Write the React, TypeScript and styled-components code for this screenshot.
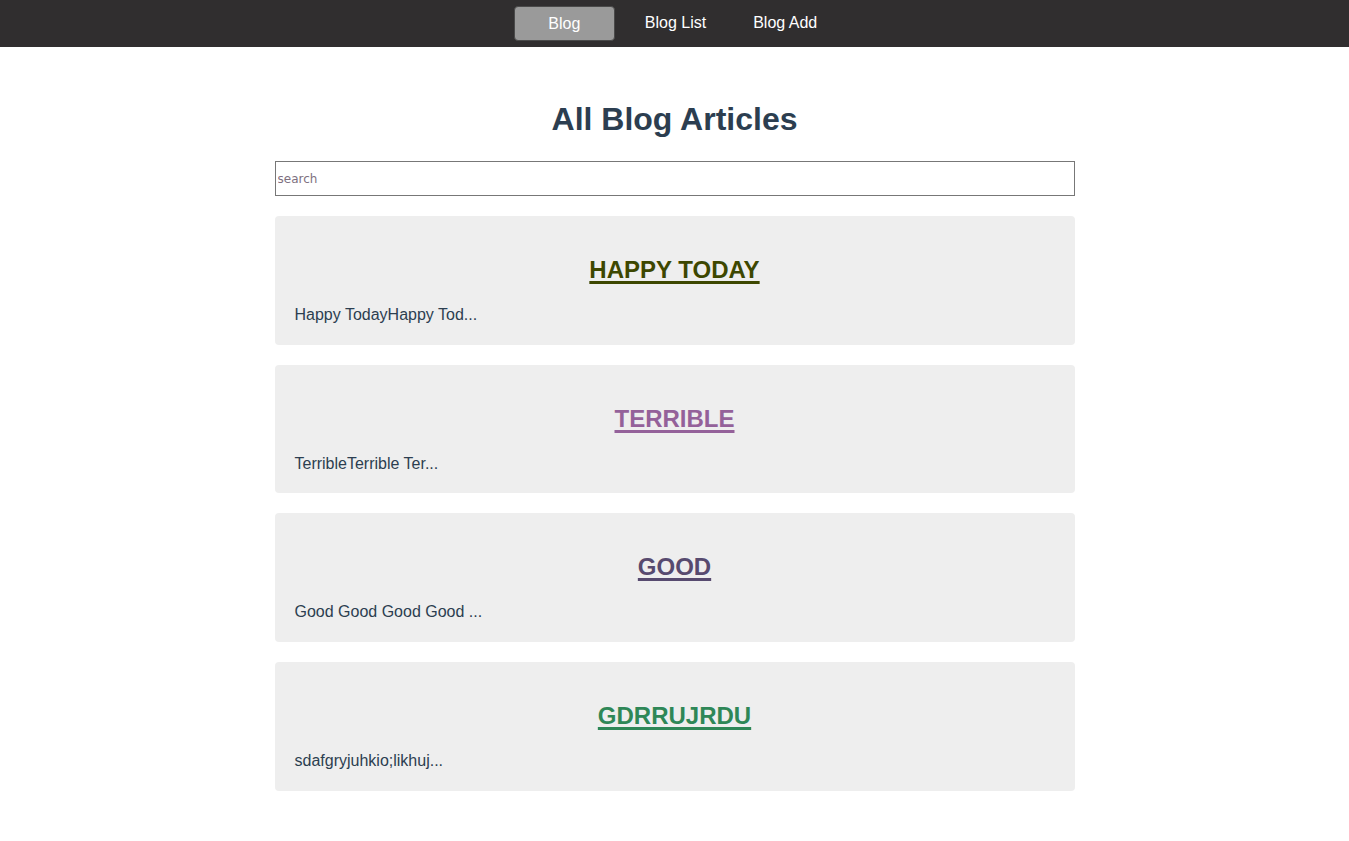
import React, { useState } from "react";
import styled, { createGlobalStyle } from "styled-components";

const GlobalStyle = createGlobalStyle`
  html, body { margin: 0; padding: 0; background: #fff; }
  body { font-family: "Liberation Sans", Arial, Helvetica, sans-serif; color: #2c3e50; }
`;

const NavBar = styled.nav`
  height: 47px;
  background: #302e2f;
  display: flex;
  justify-content: center;
  align-items: flex-start;
  padding-right: 18px;
  box-sizing: border-box;
`;

const NavItem = styled.a<{ $active?: boolean; $gap?: number }>`
  display: flex;
  align-items: center;
  justify-content: center;
  box-sizing: border-box;
  height: 35px;
  margin-top: 6px;
  margin-left: ${(p) => p.$gap ?? 0}px;
  width: ${(p) => (p.$active ? "101px" : "auto")};
  font-size: 16px;
  color: #fff;
  text-decoration: none;
  background: ${(p) => (p.$active ? "#9a9a9a" : "transparent")};
  border: ${(p) => (p.$active ? "1px solid #4a4a4a" : "none")};
  border-radius: 4px;
  cursor: pointer;
  padding-bottom: ${(p) => (p.$active ? "0" : "2px")};
`;

const Main = styled.main`
  width: 800px;
  margin: 0 auto;
  padding-top: 54px;
  padding-bottom: 40px;
`;

const Title = styled.h1`
  margin: 0 0 23px;
  text-align: center;
  font-size: 32px;
  font-weight: bold;
  line-height: 37px;
  color: #2c3e50;
`;

const Search = styled.input`
  display: block;
  box-sizing: border-box;
  width: 800px;
  height: 35px;
  margin: 0 0 20px;
  padding: 1px 2px 0;
  border: 1px solid #777;
  font-family: "DejaVu Sans", Verdana, sans-serif;
  font-size: 12px;
  outline: none;
  &::placeholder { color: #7e7080; }
`;

const Card = styled.article`
  background: #eee;
  border-radius: 4px;
  padding: 20px;
  margin-bottom: 20px;
  height: 128.7px;
  box-sizing: border-box;
`;

const CardTitle = styled.h2<{ $color: string }>`
  margin: 20px 0 22px;
  text-align: center;
  font-size: 24px;
  line-height: 28px;
  font-weight: bold;
  a {
    color: ${(p) => p.$color};
    text-decoration: underline;
    text-decoration-thickness: 3px;
    text-underline-offset: 3px;
  }
`;

const Snippet = styled.p`
  margin: 0;
  font-size: 16px;
  line-height: 18px;
  color: #2c3e50;
`;

const posts = [
  { title: "HAPPY TODAY", color: "#3d4700", body: "Happy TodayHappy Tod..." },
  { title: "TERRIBLE", color: "#94619a", body: "TerribleTerrible Ter..." },
  { title: "GOOD", color: "#574a6f", body: "Good Good Good Good ..." },
  { title: "GDRRUJRDU", color: "#2e8757", body: "sdafgryjuhkio;likhuj..." },
];

export default function App() {
  const [q, setQ] = useState("");
  const list = posts.filter((p) => p.title.toLowerCase().includes(q.toLowerCase()));
  return (
    <>
      <GlobalStyle />
      <NavBar>
        <NavItem $active>Blog</NavItem>
        <NavItem $gap={30}>Blog List</NavItem>
        <NavItem $gap={47}>Blog Add</NavItem>
      </NavBar>
      <Main>
        <Title>All Blog Articles</Title>
        <Search placeholder="search" value={q} onChange={(e) => setQ(e.target.value)} />
        {list.map((p) => (
          <Card key={p.title}>
            <CardTitle $color={p.color}>
              <a href="#">{p.title}</a>
            </CardTitle>
            <Snippet>{p.body}</Snippet>
          </Card>
        ))}
      </Main>
    </>
  );
}
